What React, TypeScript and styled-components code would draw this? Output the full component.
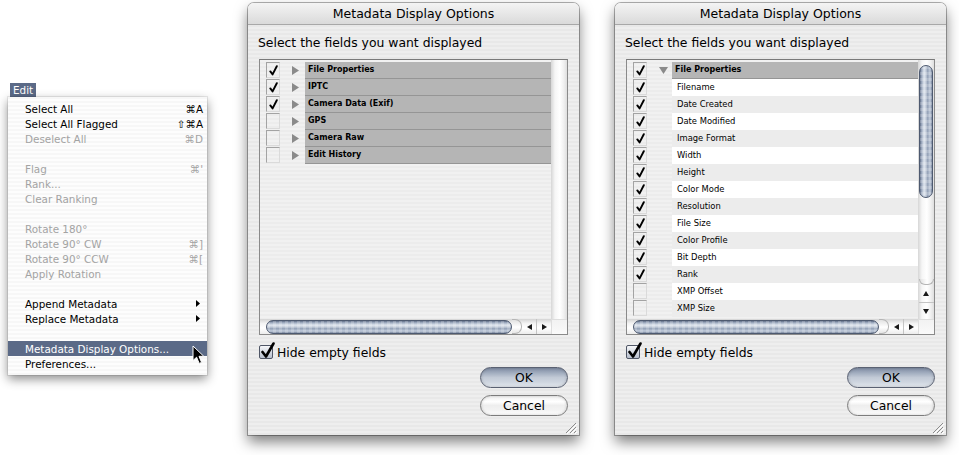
import React from 'react';
import styled, { createGlobalStyle } from 'styled-components';

const GlobalStyle = createGlobalStyle`
  html, body { margin: 0; padding: 0; background: #ffffff; }
  body { font-family: "DejaVu Sans", "Noto Sans", sans-serif; color: #000; }
  * { box-sizing: border-box; }
`;

const Page = styled.div`
  width: 959px;
  height: 455px;
  overflow: hidden;
  display: flex;
  align-items: flex-start;
  padding-left: 8px;
`;

/* ---------- Menu ---------- */

const MenuColumn = styled.div`
  position: relative;
  width: 199px;
  margin-top: 83px;
  display: flex;
  flex-direction: column;
  align-items: flex-start;
`;

const MenuTitle = styled.div`
  margin-left: 2px;
  height: 14px;
  padding: 0 3px 0 3px;
  background: #5b6a87;
  color: #fff;
  font-size: 10.4px;
  line-height: 14px;
`;

const MenuBody = styled.div`
  width: 199px;
  padding: 4px 0;
  background: repeating-linear-gradient(to bottom, #f7f7f7 0 2px, #fdfdfd 2px 4px);
  box-shadow: 0 0 0 1px rgba(0, 0, 0, 0.08), 0 4px 10px rgba(0, 0, 0, 0.45);
`;

const MenuItem = styled.div<{ $disabled?: boolean; $active?: boolean }>`
  height: 15px;
  display: flex;
  align-items: center;
  padding: 0 4px 0 17px;
  font-size: 10.4px;
  white-space: nowrap;
  color: ${(p) => (p.$active ? '#fff' : p.$disabled ? '#a3a3a3' : '#000')};
  background: ${(p) => (p.$active ? '#5b6a87' : 'transparent')};
`;

const Shortcut = styled.span`
  margin-left: auto;
`;

const SubArrow = styled.svg`
  margin-left: auto;
  margin-right: 3px;
`;

const Cursor = styled.svg`
  position: absolute;
  left: 184px;
  top: 262px;
`;

type MenuEntry = {
  label?: string;
  shortcut?: string;
  disabled?: boolean;
  submenu?: boolean;
  active?: boolean;
};

const menuEntries: MenuEntry[] = [
  { label: 'Select All', shortcut: '⌘A' },
  { label: 'Select All Flagged', shortcut: '⇧⌘A' },
  { label: 'Deselect All', shortcut: '⌘D', disabled: true },
  {},
  { label: 'Flag', shortcut: "⌘'", disabled: true },
  { label: 'Rank...', disabled: true },
  { label: 'Clear Ranking', disabled: true },
  {},
  { label: 'Rotate 180°', disabled: true },
  { label: 'Rotate 90° CW', shortcut: '⌘]', disabled: true },
  { label: 'Rotate 90° CCW', shortcut: '⌘[', disabled: true },
  { label: 'Apply Rotation', disabled: true },
  {},
  { label: 'Append Metadata', submenu: true },
  { label: 'Replace Metadata', submenu: true },
  {},
  { label: 'Metadata Display Options...', active: true },
  { label: 'Preferences...' },
];

function EditMenu() {
  return (
    <MenuColumn>
      <MenuTitle>Edit</MenuTitle>
      <MenuBody>
        {menuEntries.map((m, i) => (
          <MenuItem key={i} $disabled={m.disabled} $active={m.active}>
            {m.label}
            {m.shortcut && <Shortcut>{m.shortcut}</Shortcut>}
            {m.submenu && (
              <SubArrow width="4" height="7" viewBox="0 0 4 7">
                <path d="M0 0 L4 3.5 L0 7 Z" fill="#000" />
              </SubArrow>
            )}
          </MenuItem>
        ))}
      </MenuBody>
      <Cursor width="13" height="20" viewBox="0 0 13 20">
        <path
          d="M1 1 L1 15.5 L4.6 12.2 L7.2 18.4 L9.6 17.4 L7 11.3 L11.8 11.3 Z"
          fill="#000"
          stroke="#fff"
          strokeWidth="1"
          strokeLinejoin="round"
        />
      </Cursor>
    </MenuColumn>
  );
}

/* ---------- Dialog ---------- */

const Window = styled.div<{ $gap: number }>`
  position: relative;
  width: 331px;
  margin-top: 3px;
  margin-left: ${(p) => p.$gap}px;
  border-radius: 6px 6px 0 0;
  background: repeating-linear-gradient(to bottom, #eeeeee 0 2px, #e8e8e8 2px 4px);
  box-shadow: 0 0 0 1px rgba(0, 0, 0, 0.3), 0 7px 14px rgba(0, 0, 0, 0.5);
  display: flex;
  flex-direction: column;
`;

const TitleBar = styled.div`
  height: 22px;
  border-radius: 6px 6px 0 0;
  background: linear-gradient(to bottom, #f4f4f4, #dadada);
  border-bottom: 1px solid #a8a8a8;
  font-size: 12.5px;
  line-height: 21px;
  text-align: center;
`;

const Body = styled.div`
  display: flex;
  flex-direction: column;
  padding: 0 11px 19px 11px;
`;

const Prompt = styled.div`
  margin-top: 9px;
  margin-left: -1px;
  height: 17px;
  font-size: 12.4px;
  line-height: 17px;
`;

const ListBox = styled.div`
  margin-top: 8px;
  width: 309px;
  height: 276px;
  border: 1px solid #8a8a8a;
  border-top-color: #7a7a7a;
  background: repeating-linear-gradient(to bottom, #f1f1f1 0 2px, #ececec 2px 4px);
  display: grid;
  grid-template-columns: 291px 16px;
  grid-template-rows: 259px 15px;
`;

const RowsArea = styled.div`
  padding-top: 2px;
  overflow: hidden;
`;

const Row = styled.div`
  height: 17px;
  display: grid;
  grid-template-columns: 26px 19px 246px;
`;

const CheckCell = styled.div`
  padding-left: 6px;
`;

const ListCheck = styled.div`
  width: 14px;
  height: 16px;
  border: 1px solid;
  border-color: #a3a3a3 #dadada #dadada #a3a3a3;
  display: flex;
  align-items: center;
  justify-content: center;
`;

const TriCell = styled.div`
  display: flex;
  align-items: center;
  padding-left: 6px;
`;

const Label = styled.div<{ $group?: boolean; $alt?: boolean }>`
  height: 17px;
  padding-left: ${(p) => (p.$group ? 3 : 5)}px;
  font-size: ${(p) => (p.$group ? '8px' : '8.4px')};
  font-weight: ${(p) => (p.$group ? 700 : 400)};
  line-height: 16px;
  white-space: nowrap;
  background: ${(p) => (p.$group ? '#b5b5b5' : p.$alt ? '#ececec' : '#ffffff')};
  border-bottom: ${(p) => (p.$group ? '1px solid #959595' : 'none')};
`;

const gelVertical =
  'linear-gradient(to right, #5f6d86 0%, #9eabc0 14%, #dfe6ef 34%, #c2cbd9 50%, #93a1b7 64%, #c3cddc 84%, #76839b 100%)';
const gelHorizontal =
  'linear-gradient(to bottom, #5f6d86 0%, #9eabc0 14%, #dfe6ef 34%, #c2cbd9 50%, #93a1b7 64%, #c3cddc 84%, #76839b 100%)';

const VTrack = styled.div`
  display: flex;
  flex-direction: column;
  align-items: center;
  background: linear-gradient(to right, #d6d6d6, #f6f6f6 25%, #ffffff 55%, #f0f0f0 80%, #dedede);
`;

const VThumb = styled.div`
  margin-top: 5px;
  width: 14px;
  height: 133px;
  border-radius: 7px;
  border: 1px solid #4e5a70;
  background:
    repeating-linear-gradient(to bottom, rgba(255, 255, 255, 0.2) 0 3px, rgba(255, 255, 255, 0) 3px 6px),
    ${gelVertical};
`;

const VSpacer = styled.div`
  flex: 1;
`;

const VCap = styled.div`
  width: 15px;
  height: 6px;
  border-radius: 0 0 7px 7px;
  border: 1px solid #b5b5b5;
  border-top: none;
  background: linear-gradient(to right, #e2e2e2, #ffffff 55%, #e6e6e6);
`;

const ArrowBox = styled.div<{ $w: number; $h: number; $divider?: 'left' | 'top' }>`
  width: ${(p) => p.$w}px;
  height: ${(p) => p.$h}px;
  display: flex;
  align-items: center;
  justify-content: center;
  border-left: ${(p) => (p.$divider === 'left' ? '1px solid #c4c4c4' : 'none')};
  border-top: ${(p) => (p.$divider === 'top' ? '1px solid #c4c4c4' : 'none')};
`;

const HTrack = styled.div`
  display: flex;
  align-items: center;
  background: linear-gradient(to bottom, #d4d4d4, #f4f4f4 30%, #ffffff 60%, #ececec);
`;

const HThumb = styled.div`
  margin-left: 6px;
  width: 246px;
  height: 14px;
  border-radius: 7px;
  border: 1px solid #4e5a70;
  background:
    repeating-linear-gradient(to right, rgba(255, 255, 255, 0.2) 0 3px, rgba(255, 255, 255, 0) 3px 6px),
    ${gelHorizontal};
`;

const HCap = styled.div`
  width: 10px;
  height: 15px;
  border-radius: 0 7px 7px 0;
  border: 1px solid #b5b5b5;
  border-left: none;
  background: linear-gradient(to bottom, #e2e2e2, #ffffff 55%, #e6e6e6);
`;

const Corner = styled.div`
  background: linear-gradient(to bottom, #f2f2f2, #fafafa);
  border-left: 1px solid #dedede;
  border-top: 1px solid #dedede;
`;

const CheckRow = styled.div`
  margin-top: 9px;
  height: 16px;
  display: flex;
  align-items: center;
  gap: 4px;
  font-size: 12.4px;
`;

const AquaCheck = styled.div`
  position: relative;
  width: 14px;
  height: 14px;
  border-radius: 2px;
  border: 1px solid #4f5666;
  background: linear-gradient(to bottom, #f7f8fa, #d2d7e0 55%, #b8c0cd);
`;

const CheckMark = styled.svg`
  position: absolute;
  left: 0px;
  top: -4px;
`;

const PushButton = styled.button<{ $default?: boolean }>`
  align-self: flex-end;
  width: 88px;
  height: 21px;
  margin-top: 7px;
  padding: 0;
  border-radius: 11px;
  border: 1px solid ${(p) => (p.$default ? '#5a6172' : '#7c7c7c')};
  font-family: "DejaVu Sans", "Noto Sans", sans-serif;
  font-size: 12.4px;
  line-height: 19px;
  color: #000;
  background: ${(p) =>
    p.$default
      ? 'linear-gradient(to bottom, #7f8ca3 0%, #a7b2c3 30%, #c2cad6 50%, #cfd6e0 75%, #e3e8ee 100%)'
      : 'linear-gradient(to bottom, #f0f0f0 0%, #ffffff 30%, #eeeeee 50%, #f3f3f3 75%, #ffffff 100%)'};
  box-shadow: inset 0 0 3px rgba(0, 0, 0, 0.2);
`;

const Grip = styled.svg`
  position: absolute;
  right: 2px;
  bottom: 1px;
`;

type RowData = { label: string; checked: boolean; group?: boolean; expanded?: boolean };

function Triangle({ down }: { down?: boolean }) {
  return down ? (
    <svg width="9" height="7" viewBox="0 0 9 7">
      <path d="M0 0 L9 0 L4.5 7 Z" fill="#8a8a8a" />
    </svg>
  ) : (
    <svg width="7" height="9" viewBox="0 0 7 9">
      <path d="M0 0 L7 4.5 L0 9 Z" fill="#8a8a8a" />
    </svg>
  );
}

function ListTick() {
  return (
    <svg width="9" height="11" viewBox="0 0 9 11">
      <path
        d="M1.3 6.4 L3.6 9.4 L7.8 1.2"
        fill="none"
        stroke="#000"
        strokeWidth="1.9"
        strokeLinecap="round"
        strokeLinejoin="round"
      />
    </svg>
  );
}

function SmallArrow({ dir }: { dir: 'left' | 'right' | 'up' | 'down' }) {
  const d =
    dir === 'left'
      ? 'M0 3 L5 0 L5 6 Z'
      : dir === 'right'
      ? 'M5 3 L0 0 L0 6 Z'
      : dir === 'up'
      ? 'M3 0 L6 5 L0 5 Z'
      : 'M3 5 L6 0 L0 0 Z';
  const horiz = dir === 'left' || dir === 'right';
  return (
    <svg width={horiz ? 5 : 6} height={horiz ? 6 : 5} viewBox={horiz ? '0 0 5 6' : '0 0 6 5'}>
      <path d={d} fill="#1a1a1a" />
    </svg>
  );
}

function Dialog({ rows, gap, scrolling }: { rows: RowData[]; gap: number; scrolling?: boolean }) {
  let itemIndex = 0;
  return (
    <Window $gap={gap}>
      <TitleBar>Metadata Display Options</TitleBar>
      <Body>
        <Prompt>Select the fields you want displayed</Prompt>
        <ListBox>
          <RowsArea>
            {rows.map((r, i) => {
              const alt = !r.group && itemIndex++ % 2 === 1;
              return (
                <Row key={i}>
                  <CheckCell>
                    <ListCheck>{r.checked && <ListTick />}</ListCheck>
                  </CheckCell>
                  <TriCell>{r.group && <Triangle down={r.expanded} />}</TriCell>
                  <Label $group={r.group} $alt={alt}>
                    {r.label}
                  </Label>
                </Row>
              );
            })}
          </RowsArea>
          <VTrack>
            {scrolling && (
              <>
                <VThumb />
                <VSpacer />
                <VCap />
                <ArrowBox $w={15} $h={17}>
                  <SmallArrow dir="up" />
                </ArrowBox>
                <ArrowBox $w={15} $h={17} $divider="top">
                  <SmallArrow dir="down" />
                </ArrowBox>
              </>
            )}
          </VTrack>
          <HTrack>
            <HThumb />
            <HCap />
            <ArrowBox $w={14} $h={15}>
              <SmallArrow dir="left" />
            </ArrowBox>
            <ArrowBox $w={15} $h={15} $divider="left">
              <SmallArrow dir="right" />
            </ArrowBox>
          </HTrack>
          <Corner />
        </ListBox>
        <CheckRow>
          <AquaCheck>
            <CheckMark width="16" height="17" viewBox="0 0 16 17">
              <path
                d="M2.5 10 L6 14.5 L13.5 1.5"
                fill="none"
                stroke="#000"
                strokeWidth="2.6"
                strokeLinecap="round"
                strokeLinejoin="round"
              />
            </CheckMark>
          </AquaCheck>
          Hide empty fields
        </CheckRow>
        <PushButton $default>OK</PushButton>
        <PushButton>Cancel</PushButton>
      </Body>
      <Grip width="12" height="12" viewBox="0 0 12 12">
        <path d="M11 1 L1 11 M11 5 L5 11 M11 9 L9 11" stroke="#8c8c8c" strokeWidth="1" />
        <path d="M12 2 L2 12 M12 6 L6 12 M12 10 L10 12" stroke="#ffffff" strokeWidth="1" />
      </Grip>
    </Window>
  );
}

const dialog1Rows: RowData[] = [
  { label: 'File Properties', checked: true, group: true },
  { label: 'IPTC', checked: true, group: true },
  { label: 'Camera Data (Exif)', checked: true, group: true },
  { label: 'GPS', checked: false, group: true },
  { label: 'Camera Raw', checked: false, group: true },
  { label: 'Edit History', checked: false, group: true },
];

const dialog2Rows: RowData[] = [
  { label: 'File Properties', checked: true, group: true, expanded: true },
  ...[
    'Filename',
    'Date Created',
    'Date Modified',
    'Image Format',
    'Width',
    'Height',
    'Color Mode',
    'Resolution',
    'File Size',
    'Color Profile',
    'Bit Depth',
    'Rank',
  ].map((label) => ({ label, checked: true })),
  { label: 'XMP Offset', checked: false },
  { label: 'XMP Size', checked: false },
];

export default function App() {
  return (
    <>
      <GlobalStyle />
      <Page>
        <EditMenu />
        <Dialog rows={dialog1Rows} gap={41} />
        <Dialog rows={dialog2Rows} gap={36} scrolling />
      </Page>
    </>
  );
}
